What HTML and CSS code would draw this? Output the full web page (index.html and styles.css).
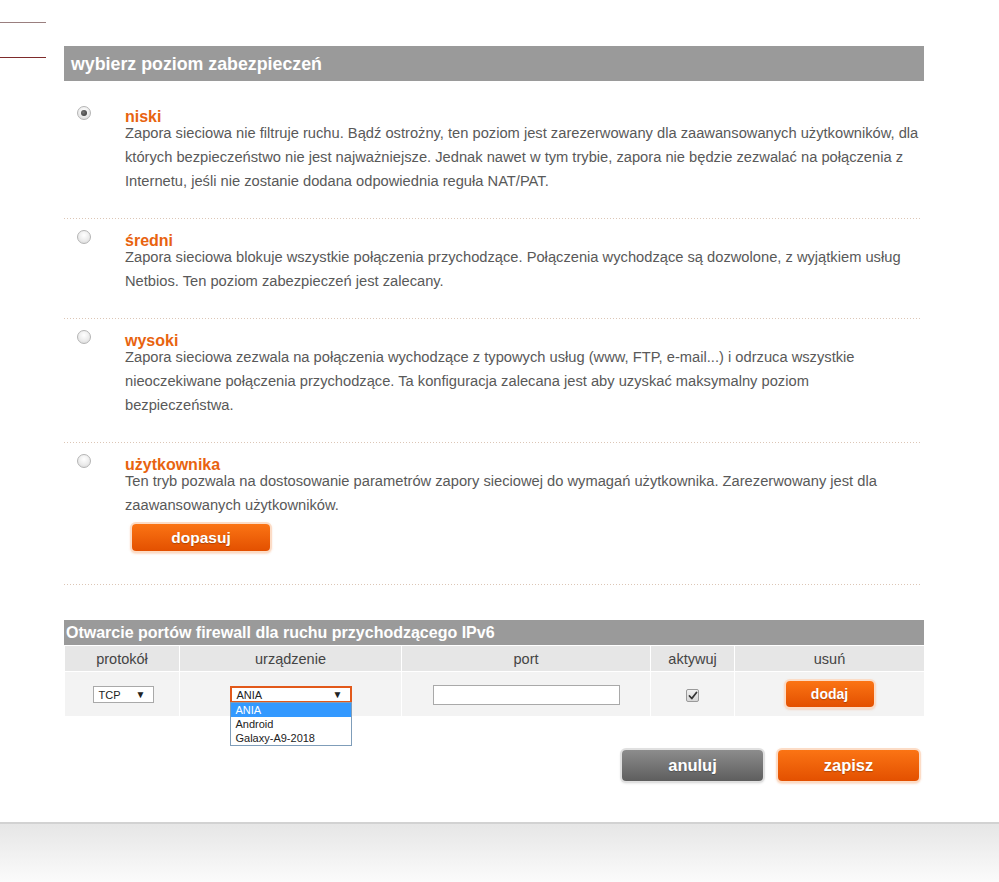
FILE: index.html
```html
<!DOCTYPE html>
<html lang="pl">
<head>
<meta charset="utf-8">
<title>Firewall</title>
<link rel="stylesheet" href="styles.css">
</head>
<body>
<div class="page">
  <div class="side">
    <div class="side-line first"></div>
    <div class="side-line second"></div>
  </div>
  <div class="main">
    <div class="bar">wybierz poziom zabezpieczeń</div>
    <div class="options">
      <div class="option">
        <span class="radio checked"></span>
        <div class="option-text">
          <div class="option-title">niski</div>
          <div class="option-desc">Zapora sieciowa nie filtruje ruchu. Bądź ostrożny, ten poziom jest zarezerwowany dla zaawansowanych użytkowników, dla których bezpieczeństwo nie jest najważniejsze. Jednak nawet w tym trybie, zapora nie będzie zezwalać na połączenia z Internetu, jeśli nie zostanie dodana odpowiednia reguła NAT/PAT.</div>
        </div>
      </div>
      <div class="option">
        <span class="radio"></span>
        <div class="option-text">
          <div class="option-title">średni</div>
          <div class="option-desc">Zapora sieciowa blokuje wszystkie połączenia przychodzące. Połączenia wychodzące są dozwolone, z wyjątkiem usług Netbios. Ten poziom zabezpieczeń jest zalecany.</div>
        </div>
      </div>
      <div class="option">
        <span class="radio"></span>
        <div class="option-text">
          <div class="option-title">wysoki</div>
          <div class="option-desc">Zapora sieciowa zezwala na połączenia wychodzące z typowych usług (www, FTP, e-mail...) i odrzuca wszystkie nieoczekiwane połączenia przychodzące. Ta konfiguracja zalecana jest aby uzyskać maksymalny poziom bezpieczeństwa.</div>
        </div>
      </div>
      <div class="option">
        <span class="radio"></span>
        <div class="option-text">
          <div class="option-title">użytkownika</div>
          <div class="option-desc">Ten tryb pozwala na dostosowanie parametrów zapory sieciowej do wymagań użytkownika. Zarezerwowany jest dla zaawansowanych użytkowników.</div>
          <button class="btn btn-orange btn-custom">dopasuj</button>
        </div>
      </div>
    </div>

    <div class="ports">
      <div class="ports-bar">Otwarcie portów firewall dla ruchu przychodzącego IPv6</div>
      <table class="ports-table">
        <colgroup>
          <col class="c1"><col class="c2"><col class="c3"><col class="c4"><col class="c5">
        </colgroup>
        <thead>
          <tr><th>protokół</th><th>urządzenie</th><th>port</th><th>aktywuj</th><th>usuń</th></tr>
        </thead>
        <tbody>
          <tr>
            <td><div class="sel sel-proto"><span>TCP</span><span class="arrow">▼</span></div></td>
            <td>
              <div class="sel-wrap">
                <div class="sel sel-dev"><span>ANIA</span><span class="arrow">▼</span></div>
                <ul class="sel-list">
                  <li class="active">ANIA</li>
                  <li>Android</li>
                  <li>Galaxy-A9-2018</li>
                </ul>
              </div>
            </td>
            <td><div class="port-input"></div></td>
            <td><span class="check"><svg width="10" height="9" viewBox="0 0 10 9"><path d="M1.5 5 L3.8 7.5 L8.5 1.5" fill="none" stroke="#333" stroke-width="1.8" stroke-linecap="round" stroke-linejoin="round"/></svg></span></td>
            <td><button class="btn btn-orange btn-add">dodaj</button></td>
          </tr>
        </tbody>
      </table>
    </div>

    <div class="actions">
      <button class="btn btn-gray btn-big">anuluj</button>
      <button class="btn btn-orange btn-big">zapisz</button>
    </div>
  </div>
</div>
<div class="footer"></div>
</body>
</html>
```

FILE: styles.css
```css
* { box-sizing: border-box; }
html, body { margin: 0; padding: 0; background: #fff; }
body {
  font-family: "Liberation Sans", Arial, sans-serif;
  color: #5a5a5a;
}
.page {
  display: flex;
  height: 822px;
}
.side {
  width: 64px;
  flex: none;
  padding-top: 22px;
}
.side-line {
  width: 46px;
  height: 1px;
}
.side-line.first { background: #9a7f7f; }
.side-line.second { background: #7e2b2b; margin-top: 34px; }

.main {
  width: 860px;
  flex: none;
  padding-top: 46px;
}
.bar {
  height: 35px;
  background: #9a9a9a;
  color: #fff;
  font-weight: bold;
  font-size: 17.8px;
  line-height: 36px;
  padding-left: 7px;
}
.options {
  padding-top: 15px;
  width: 856px;
}
.option {
  display: flex;
  padding: 13px 0 26px 0;
  background-image: linear-gradient(to right, #dcc6b6 1px, transparent 1px);
  background-size: 3px 1px;
  background-repeat: repeat-x;
  background-position: 0 100%;
  border-bottom: 1px solid transparent;
}
.radio {
  flex: none;
  width: 14px;
  height: 14px;
  margin-left: 13px;
  margin-top: -3px;
  border-radius: 50%;
  border: 1px solid #b5b5b5;
  background: radial-gradient(circle at 50% 35%, #ffffff 0%, #ececec 55%, #d4d4d4 100%);
  position: relative;
}
.radio.checked::after {
  content: "";
  position: absolute;
  left: 3px;
  top: 3px;
  width: 6px;
  height: 6px;
  border-radius: 50%;
  background: radial-gradient(circle at 40% 40%, #777, #333);
}
.option-text {
  flex: none;
  margin-left: 34px;
  width: 794px;
}
.option-title {
  color: #e8630f;
  font-weight: bold;
  font-size: 16px;
  line-height: 16px;
}
.option-desc {
  margin-top: -4px;
  font-size: 14.7px;
  line-height: 24px;
  color: #595959;
}

.btn {
  font-family: "Liberation Sans", Arial, sans-serif;
  font-weight: bold;
  color: #fff;
  border: none;
  border-radius: 4px;
  cursor: pointer;
  text-shadow: 0 1px 1px rgba(0,0,0,0.25);
  padding: 0;
}
.btn-orange {
  background: linear-gradient(#fb7414, #e35000);
  box-shadow: 0 0 0 2px #fcdcc6, 0 1px 2px 2px rgba(240,160,110,0.35);
}
.btn-gray {
  background: linear-gradient(#8c8c8c, #5e5e5e);
  box-shadow: 0 0 0 2px #e0e0e0, 0 1px 2px 2px rgba(0,0,0,0.08);
}
.btn-custom {
  display: block;
  width: 138px;
  height: 27px;
  margin: 7px 0 8px 7px;
  font-size: 15.5px;
}

.ports {
  margin-top: 34px;
}
.ports-bar {
  height: 25px;
  background: #9a9a9a;
  color: #fff;
  font-weight: bold;
  font-size: 16px;
  line-height: 25px;
  padding-left: 2px;
  white-space: nowrap;
}
.ports-table {
  width: 860px;
  border-collapse: collapse;
  table-layout: fixed;
}
.c1 { width: 115px; }
.c2 { width: 222px; }
.c3 { width: 249px; }
.c4 { width: 84px; }
.c5 { width: 190px; }
.ports-table th,
.ports-table td {
  border: 1px solid #fff;
  text-align: center;
  padding: 0;
}
.ports-table th {
  height: 26px;
  background: #e6e6e6;
  font-weight: normal;
  font-size: 14.5px;
  color: #444;
}
.ports-table td {
  height: 45px;
  background: #f3f3f3;
  vertical-align: middle;
}

.sel {
  display: inline-flex;
  justify-content: space-between;
  align-items: center;
  height: 17px;
  background: #fff;
  font-size: 11px;
  color: #222;
  text-align: left;
  vertical-align: middle;
}
.sel .arrow { font-size: 10px; }
.sel-proto {
  width: 61px;
  border: 1px solid #a9a9a9;
  padding: 0 7px 0 5px;
  margin-left: 2px;
}
.sel-wrap {
  position: relative;
  display: inline-block;
  width: 122px;
  vertical-align: middle;
  margin-top: 1px;
}
.sel-dev {
  display: flex;
  width: 122px;
  height: 17px;
  border: 2px solid #e2591a;
  padding: 0 7px 0 5px;
}
.sel-list {
  position: absolute;
  left: 0;
  top: 16px;
  width: 122px;
  margin: 0;
  padding: 0;
  list-style: none;
  background: #fff;
  border: 1px solid #7f9db9;
  text-align: left;
  z-index: 2;
}
.sel-list li {
  font-size: 11px;
  line-height: 14px;
  padding-left: 5px;
  color: #222;
}
.sel-list li.active {
  background: #3399ff;
  color: #fff;
}
.port-input {
  display: inline-block;
  width: 187px;
  height: 20px;
  border: 1px solid #a9a9a9;
  background: #fff;
  vertical-align: middle;
  margin-top: 2px;
}
.check {
  display: inline-flex;
  align-items: center;
  justify-content: center;
  width: 13px;
  height: 13px;
  border: 1px solid #9a9a9a;
  border-radius: 2px;
  background: linear-gradient(#f0f0f0, #d6d6d6);
  vertical-align: middle;
  margin-top: 2px;
}
.btn-add {
  width: 88px;
  height: 26px;
  font-size: 14px;
  vertical-align: middle;
}

.actions {
  display: flex;
  justify-content: flex-end;
  gap: 15px;
  padding-right: 5px;
  margin-top: 33px;
}
.btn-big {
  width: 141px;
  height: 31px;
  font-size: 16.5px;
}

.footer {
  height: 60px;
  border-top: 2px solid #d2d2d2;
  background: linear-gradient(#e6e6e6, #fbfbfb);
}
```
